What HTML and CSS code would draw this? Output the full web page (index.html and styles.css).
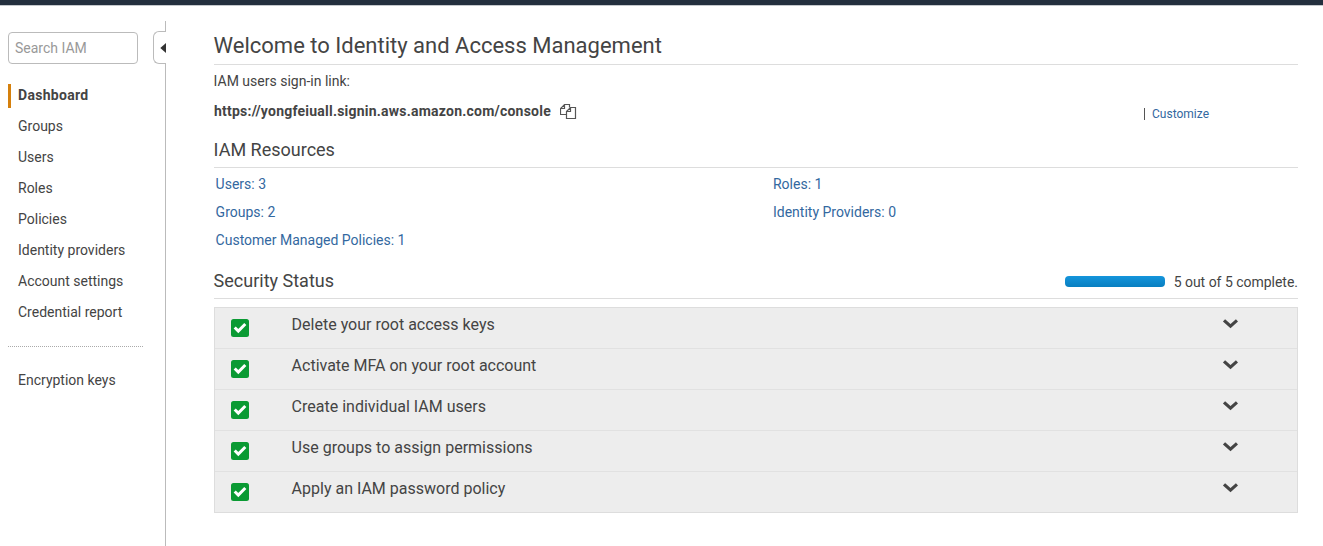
FILE: index.html
```html
<!DOCTYPE html>
<html lang="en">
<head>
<meta charset="utf-8">
<title>IAM Management Console</title>
<link rel="stylesheet" href="styles.css">
</head>
<body>
<svg class="defs" width="0" height="0">
  <symbol id="check" viewBox="0 0 18 18">
    <rect width="18" height="18" rx="2.500" fill="#0a9a33"/>
    <path d="M3.700 8.500 7.300 12.100 14.300 5" fill="none" stroke="#fff" stroke-width="3"/>
  </symbol>
  <symbol id="chevron" viewBox="0 0 16 10">
    <path d="M3.200 2.400 8.500 7.200 13.800 2.400" fill="none" stroke="#444" stroke-width="3.200" stroke-linecap="square"/>
  </symbol>
</svg>
<header class="topbar"></header>
<div class="layout">
  <aside class="sidebar">
    <div class="tools">
      <input class="search" type="text" placeholder="Search IAM">
      <div class="collapse"><svg width="6" height="10" viewBox="0 0 6 10"><path d="M6 0v10L0.3 5z" fill="#333"/></svg></div>
    </div>
    <nav class="nav">
      <a class="item active">Dashboard</a>
      <a class="item">Groups</a>
      <a class="item">Users</a>
      <a class="item">Roles</a>
      <a class="item">Policies</a>
      <a class="item">Identity providers</a>
      <a class="item">Account settings</a>
      <a class="item">Credential report</a>
      <div class="separator"></div>
      <a class="item">Encryption keys</a>
    </nav>
  </aside>
  <main class="main">
    <h1 class="title"><span>Welcome to Identity and Access Management</span></h1>
    <div class="label">IAM users sign-in link:</div>
    <div class="signin">
      <strong class="url">https://yongfeiuall.signin.aws.amazon.com/console</strong>
      <svg class="copy" width="17" height="17" viewBox="0 0 17 17" fill="none" stroke="#555" stroke-width="1.200">
        <path d="M6.500 11.500h-6v-6l4-4h5v3M4.500 1.500v4h-4"/>
        <path d="M6.500 8.500l4-4h5v11h-9zM10.500 4.500v4h-4"/>
      </svg>
      <div class="customize"><span class="divider"></span><a>Customize</a></div>
    </div>
    <h2 class="heading resources-title"><span>IAM Resources</span></h2>
    <div class="resources">
      <a>Users: 3</a><a>Roles: 1</a>
      <a>Groups: 2</a><a>Identity Providers: 0</a>
      <a>Customer Managed Policies: 1</a>
    </div>
    <h2 class="heading status-title"><span>Security Status</span>
      <div class="progress"><div class="meter"></div><span class="count">5 out of 5 complete.</span></div>
    </h2>
    <div class="panel">
      <div class="row"><svg class="check"><use href="#check"/></svg><span>Delete your root access keys</span><svg class="chevron"><use href="#chevron"/></svg></div>
      <div class="row"><svg class="check"><use href="#check"/></svg><span>Activate MFA on your root account</span><svg class="chevron"><use href="#chevron"/></svg></div>
      <div class="row"><svg class="check"><use href="#check"/></svg><span>Create individual IAM users</span><svg class="chevron"><use href="#chevron"/></svg></div>
      <div class="row"><svg class="check"><use href="#check"/></svg><span>Use groups to assign permissions</span><svg class="chevron"><use href="#chevron"/></svg></div>
      <div class="row"><svg class="check"><use href="#check"/></svg><span>Apply an IAM password policy</span><svg class="chevron"><use href="#chevron"/></svg></div>
    </div>
  </main>
</div>
</body>
</html>
```
FILE: styles.css
```css
* { box-sizing: border-box; }
body { margin: 0; height: 546px; overflow: hidden; background: #fff; color: #444; font: 14px/28px Roboto, sans-serif; }
.defs { display: block; }
.topbar { height: 6px; background: #232f3e; border-bottom: 1px solid #c4c8cc; }
.layout { display: flex; height: 540px; }
.sidebar { width: 166px; margin-top: 15px; flex: none; background: linear-gradient(#bbb, #bbb) right / 1px 100% no-repeat; }
.tools { display: flex; height: 53px; padding: 10px 0 0 8px; }
.search { width: 130px; height: 32px; margin-top: 1px; padding: 0 6px; border: 1px solid #bbb; border-radius: 4px; font: 14px Roboto, sans-serif; outline: none; }
.search::placeholder { color: #999; opacity: 1; }
.collapse { width: 13px; height: 33px; margin-left: 15px; border: 1px solid #bbb; border-right: 0; border-radius: 6px 0 0 6px; background: #fff; display: flex; align-items: center; justify-content: flex-end; }
.nav { padding: 6px 0 0 8px; }
.item { display: block; height: 31px; line-height: 31px; padding-left: 10px; }
.active { height: 24px; line-height: 23px; margin: 4px 0 3px; padding-left: 7px; border-left: 3px solid #d5800d; font-weight: 700; letter-spacing: 0.3px; }
.separator { width: 135px; margin: 18px 0; border-top: 1px dotted #aaa; }
.main { width: 1084px; margin-left: 48px; padding-top: 21px; }
.title { margin: 0; height: 38px; line-height: 37px; border-bottom: 1px solid #ddd; font-size: 22px; font-weight: 400; }
.title span, .heading > span { margin-left: -0.4px; }
.label { height: 32px; line-height: 32px; margin-left: -0.4px; }
.signin { display: flex; height: 29px; line-height: 29px; }
.url { letter-spacing: 0.225px; }
.copy { margin: 6px 0 0 9px; }
.customize { display: flex; gap: 7px; margin-left: auto; padding-right: 89px; font-size: 12px; line-height: 35px; }
.divider { width: 1px; height: 12px; margin-top: 11px; background: #555; }
.customize a, .resources a { color: #3368a0; }
.heading { margin: 0; height: 35px; line-height: 34px; border-bottom: 1px solid #ddd; font-size: 18px; font-weight: 400; }
.resources-title { margin-top: 7px; }
.resources { display: grid; grid-template-columns: 557.400px 1fr; grid-auto-rows: 28px; padding: 2px 0 0 1.600px; }
.status-title { display: flex; justify-content: space-between; margin-top: 10px; }
.progress { display: flex; gap: 9px; align-items: center; font-size: 14px; padding-top: 2px; }
.count { letter-spacing: -0.02px; }
.meter { width: 100px; height: 11px; margin-top: -2px; border-radius: 4px; background: linear-gradient(#1595dc, #087fc0); }
.panel { margin-top: 8px; height: 206px; border: 1px solid #ddd; background: #ededed; }
.row { display: flex; height: 41px; line-height: 34px; font-size: 16px; padding-left: 16px; border-bottom: 1px solid #e1e1e1; }
.row:last-child { height: 40px; border: 0; }
.check { width: 18px; height: 18px; margin: 11px 42.600px 0 0; }
.chevron { width: 16px; height: 10px; margin: 11px 59px 0 auto; }
```
